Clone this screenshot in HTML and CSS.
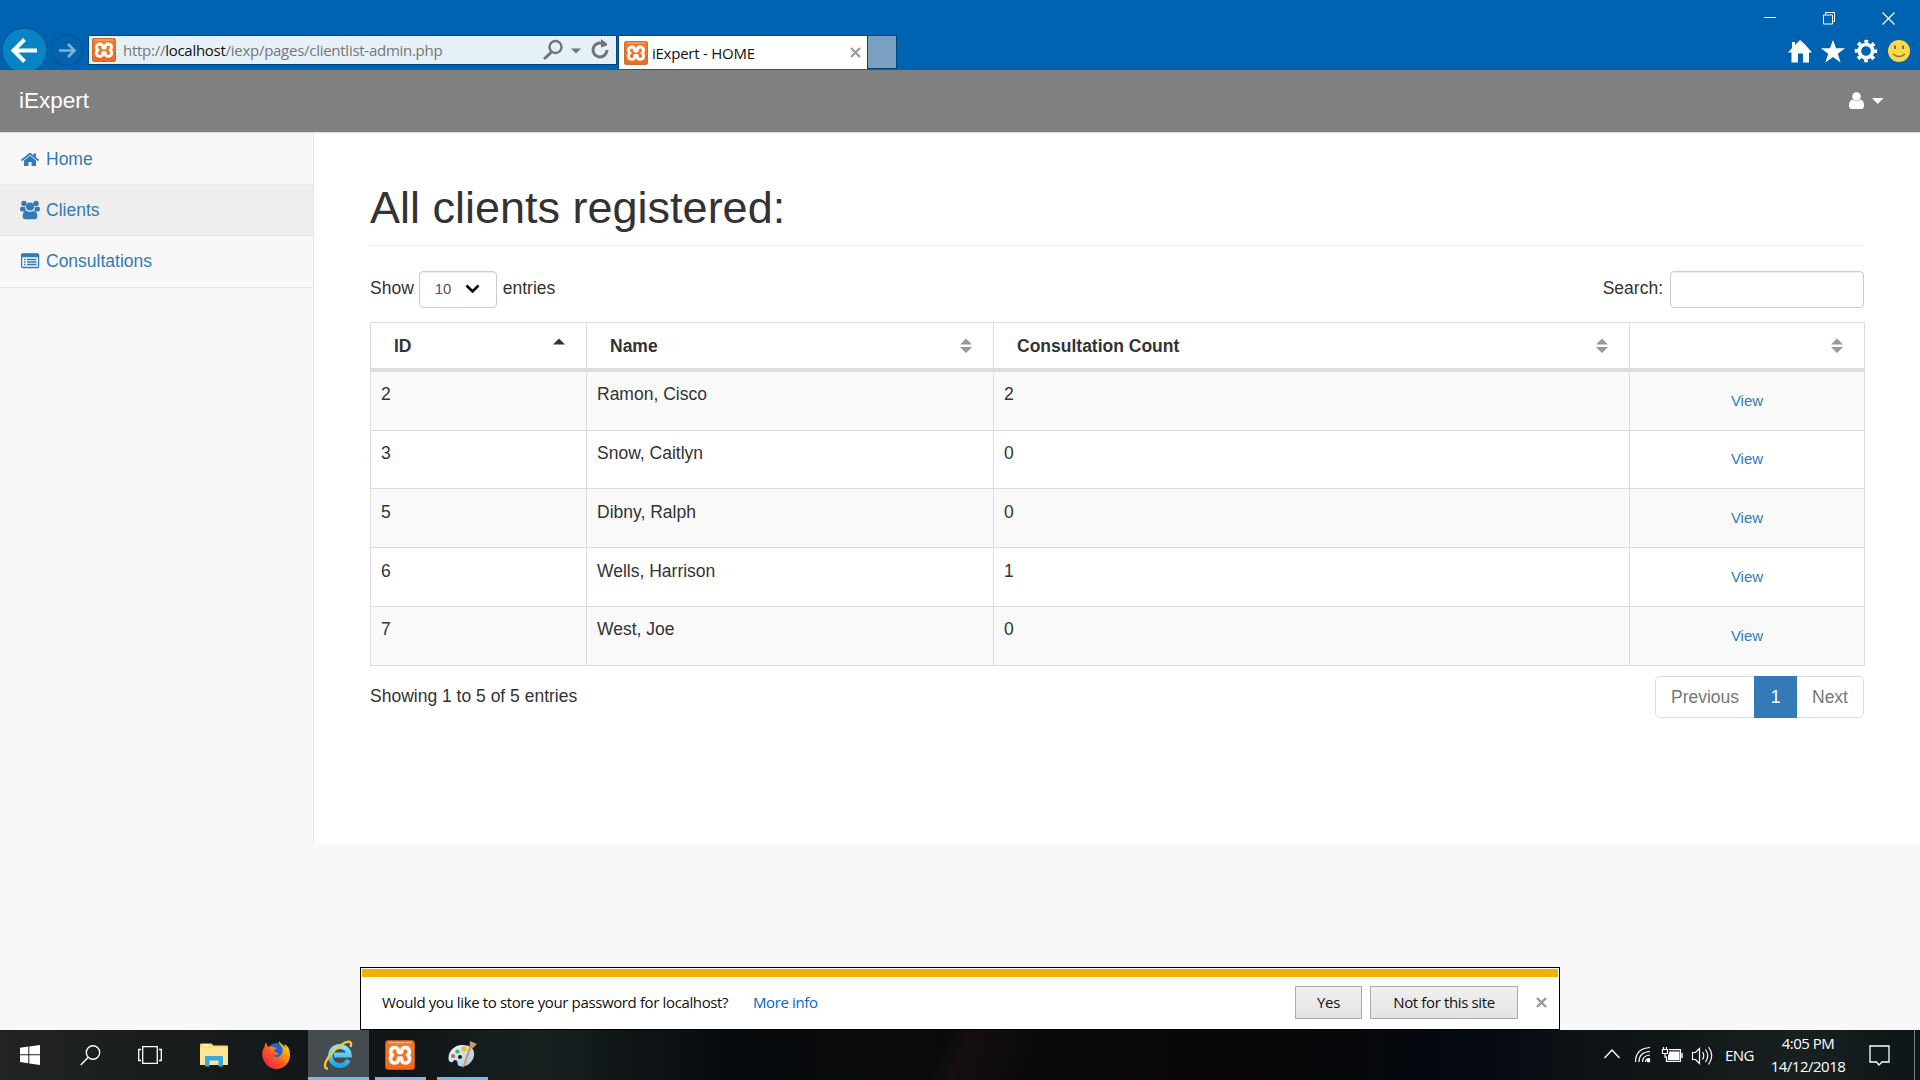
FILE: index.html
```html
<!DOCTYPE html>
<html lang="en">
<head>
<meta charset="utf-8">
<title>iExpert - HOME</title>
<link rel="stylesheet" href="styles.css">
</head>
<body>
<svg class="defs" width="0" height="0">
  <defs>
    <linearGradient id="orange" x1="0" y1="0" x2="0" y2="1"><stop offset="0" stop-color="#d9601a"/><stop offset=".15" stop-color="#f47a2a"/><stop offset="1" stop-color="#f06a1a"/></linearGradient>
    <linearGradient id="fox" x1="0" y1="1" x2="1" y2="0"><stop offset="0" stop-color="#e8115b"/><stop offset=".45" stop-color="#ff5a1f"/><stop offset=".75" stop-color="#ffb000"/><stop offset="1" stop-color="#fff04a"/></linearGradient>
    <linearGradient id="ie" x1="0" y1="0" x2="0" y2="1"><stop offset="0" stop-color="#8ce4fb"/><stop offset="1" stop-color="#22a5e4"/></linearGradient>
    <linearGradient id="pal" x1="0" y1="0" x2="1" y2="1"><stop offset="0" stop-color="#eef7fc"/><stop offset="1" stop-color="#9cc8e6"/></linearGradient>
  </defs>
  <symbol id="xampp" viewBox="0 0 30 30">
    <rect x=".5" y=".5" width="29" height="29" rx="2.5" fill="url(#orange)" stroke="#b9541c"/>
    <path d="M3 2.5h24" stroke="#f8b48a" stroke-width="1.5"/>
    <path d="M10 7.500c-5 0-5.500 5.500-2.500 7.500-3 2-3 8 2.500 8 3 0 3.500-2.500 3.500-5h3c0 2.500.5 5 3.500 5 5.500 0 5.500-6 2.500-8 3-2 2.500-7.500-2.500-7.500-3 0-3.500 2.500-3.500 5h-3C13.500 10 13 7.500 10 7.500z" fill="none" stroke="#fff" stroke-width="3.600" stroke-linejoin="round"/>
  </symbol>
</svg>

<header class="browser">
  <div class="caption">
    <svg width="13" height="13"><path d="M0 5.500h12" stroke="#fff"/></svg>
    <svg width="13" height="13" fill="none" stroke="#fff"><path d="M.5 3h9v9h-9zM2.500 3V.5h9v9H9.500"/></svg>
    <svg width="13" height="13" stroke="#fff" stroke-width="1.200"><path d="M.5.5l12 12M12.500.5l-12 12"/></svg>
  </div>
  <div class="toolbar">
    <svg class="nav" width="86" height="43" viewBox="0 27 86 43">
      <circle cx="24.500" cy="50.500" r="22.500" fill="#0684c6" stroke="#004c87"/>
      <path d="M37 50.500H14M24.500 39.500l-11 11 11 11" fill="none" stroke="#fff" stroke-width="4"/>
      <circle cx="67" cy="50" r="15.500" fill="#0463ad" stroke="#004c87"/>
      <path d="M59 50.500h14M68 44l6.500 6.500-6.500 6.500" fill="none" stroke="#7fb1da" stroke-width="2.600"/>
    </svg>
    <div class="address">
      <svg width="24" height="24"><use href="#xampp"/></svg>
      <span class="url">http://<b>localhost</b>/iexp/pages/clientlist-admin.php</span>
      <svg class="tools" width="68" height="22" viewBox="542 40 68 22">
        <circle cx="555.500" cy="48" r="6" fill="none" stroke="#6f7477" stroke-width="2.400"/><path d="M551.500 53l-7.500 7" stroke="#6f7477" stroke-width="3"/>
        <path d="M571 49.500h10l-5 5z" fill="#6f7477"/>
        <path d="M602 44.300a7 7 0 1 0 5 6.700" fill="none" stroke="#6f7477" stroke-width="3"/><path d="M601 40l6 4.500v2l-6 2z" fill="#6f7477"/>
      </svg>
    </div>
    <div class="tab">
      <svg width="24" height="24"><use href="#xampp"/></svg>
      <span class="tab-title">iExpert - HOME</span>
      <svg width="11" height="11"><path d="M1 1l9 9M10 1l-9 9" stroke="#999" stroke-width="2.200"/></svg>
    </div>
    <div class="new-tab"></div>
    <svg class="commands" width="124" height="26" viewBox="1788 38 124 26">
      <path d="M1800 40l5 4.500 7 8h-3v10h-6v-9h-5v9h-6.500v-10h-3.500l4-4.500v-6h3v3z" fill="#fff"/>
      <path d="M1833 40l3 8.300h9l-7.200 5.400 2.800 8.800-7.600-5.400-7.600 5.400 2.800-8.800-7.200-5.400h9z" fill="#fff"/>
      <circle cx="1866" cy="51" r="6.700" fill="none" stroke="#fff" stroke-width="3.700"/>
      <circle cx="1866" cy="51" r="9.500" fill="none" stroke="#fff" stroke-width="3.400" stroke-dasharray="3.730 3.730" stroke-dashoffset="1.860"/>
      <circle cx="1899" cy="51" r="11" fill="#fdd949"/>
      <path d="M1895 45.500v3.500M1903 45.500v3.500" stroke="#7a7440" stroke-width="2"/><path d="M1893 54q6 5 12 0" fill="none" stroke="#7a7440" stroke-width="1.600"/>
    </svg>
  </div>
</header>

<nav class="navbar">
  <span class="brand">iExpert</span>
  <svg width="36" height="18" viewBox="1848 92 36 18" fill="#fff"><circle cx="1856.500" cy="96.500" r="4.300"/><path d="M1852.500 99.500q4 3.500 8 0 3.500 1 3.500 6 0 3.500-3 3.500h-9q-3 0-3-3.500 0-5 3.500-6zM1872 98h11.500l-5.700 6z"/></svg>
</nav>

<div class="page">
  <aside class="sidebar">
    <a class="item"><svg width="20" height="20" viewBox="0 0 20 20" fill="#337ab7"><path d="M10 5.500l6 5V16h-4.500v-4h-3v4H4v-5.500z"/><path d="M1.500 10.500L10 3.500l8.500 7" fill="none" stroke="#337ab7" stroke-width="1.700"/><path d="M13.500 3.500H16v4l-2.500-2z"/></svg>Home</a>
    <a class="item active"><svg width="20" height="20" viewBox="0 0 20 20" fill="#337ab7"><circle cx="4" cy="3.500" r="2.700"/><circle cx="16" cy="3.500" r="2.700"/><circle cx="10" cy="6.500" r="4"/><path d="M1.500 6.500q2 1 3.800.3-.6 2.500 1 4.700H2Q0 11.500 0 9.500q0-2.500 1.500-3zM18.500 6.500q-2 1-3.800.3.600 2.500-1 4.700H18q2 0 2-2 0-2.500-1.500-3zM6 10.500q4 2.500 8 0 3.300 1 3.300 6 0 2.700-2.500 2.700H5.200q-2.500 0-2.500-2.700 0-5 3.300-6z"/></svg>Clients</a>
    <a class="item"><svg width="20" height="20" viewBox="0 0 20 20"><rect x="1.600" y="3" width="17" height="13.500" rx="1.300" fill="none" stroke="#337ab7" stroke-width="1.300"/><path d="M1.500 2.700h17v3.500h-17z" fill="#337ab7"/><path d="M4 8.500h1.500M7 8.500h9.500M4 11h1.500M7 11h9.500M4 13.500h1.500M7 13.500h9.500" stroke="#337ab7" stroke-width="1.400"/></svg>Consultations</a>
  </aside>
  <main class="content">
    <h1>All clients registered:</h1>
    <div class="controls">
      <span>Show</span>
      <span class="select">10<svg width="15" height="10"><path d="M1.500 1.500l6 6 6-6" fill="none" stroke="#000" stroke-width="2.600"/></svg></span>
      <span>entries</span>
      <span class="search-label">Search:</span>
      <input class="search" type="text">
    </div>
    <table>
      <colgroup><col class="c-id"><col class="c-name"><col class="c-count"><col class="c-view"></colgroup>
      <thead><tr>
        <th><div>ID<svg width="12" height="16"><path d="M0 6.500h12L6 .5z" fill="#333"/></svg></div></th>
        <th><div>Name<svg width="12" height="16"><path d="M0 6.500h12L6 .5zM0 9h12l-6 6z" fill="#999"/></svg></div></th>
        <th><div>Consultation Count<svg width="12" height="16"><path d="M0 6.500h12L6 .5zM0 9h12l-6 6z" fill="#999"/></svg></div></th>
        <th><div><svg width="12" height="16"><path d="M0 6.500h12L6 .5zM0 9h12l-6 6z" fill="#999"/></svg></div></th>
      </tr></thead>
      <tbody>
        <tr><td>2</td><td>Ramon, Cisco</td><td>2</td><td><a>View</a></td></tr>
        <tr class="short"><td>3</td><td>Snow, Caitlyn</td><td>0</td><td><a>View</a></td></tr>
        <tr class="low"><td>5</td><td>Dibny, Ralph</td><td>0</td><td><a>View</a></td></tr>
        <tr class="low"><td>6</td><td>Wells, Harrison</td><td>1</td><td><a>View</a></td></tr>
        <tr><td>7</td><td>West, Joe</td><td>0</td><td><a>View</a></td></tr>
      </tbody>
    </table>
    <div class="footer">
      <span>Showing 1 to 5 of 5 entries</span>
      <div class="pagination"><span class="prev">Previous</span><span class="current">1</span><span class="next">Next</span></div>
    </div>
  </main>
</div>

<div class="prompt">
  <div class="prompt-body">
    <span class="question">Would you like to store your password for localhost?</span>
    <a class="more">More info</a>
    <button class="yes">Yes</button>
    <button class="no">Not for this site</button>
    <svg width="11" height="11"><path d="M1 1l9 9M10 1l-9 9" stroke="#999" stroke-width="2.400"/></svg>
  </div>
</div>

<footer class="taskbar">
  <div class="task system"><svg width="20" height="20" fill="#fff"><path d="M0 2.700L8.300 1.500v7.800H0zM9.300 1.400L20 0v9.300H9.300zM0 10.300h8.300v7.900L0 17zM9.300 10.300H20V20L9.300 18.400z"/></svg></div>
  <div class="task system"><svg width="21" height="21" fill="none" stroke="#fff" stroke-width="1.400"><circle cx="13" cy="7.500" r="6.700"/><path d="M8.300 12.200L.7 20"/></svg></div>
  <div class="task system"><svg width="24" height="18" fill="none" stroke="#fff" stroke-width="1.300"><path d="M4.700.7h14.600v16.600H4.700zM3 3.500H.7v11H3M21 3.500h2.300v11H21"/></svg></div>
  <div class="task pinned"><svg width="28" height="24"><path d="M0 1.500Q0 .5 1 .5h10.500l2 2H27q1 0 1 1V22H0z" fill="#f9d778"/><path d="M0 4.500h28V22H0z" fill="#ffe693"/><path d="M3 1.500h6v1.500H3z" fill="#fff"/><path d="M5 23.500V14q0-1 1-1h16q1 0 1 1v9.500h-4.500V17.500h-9v6z" fill="#37a9e1"/></svg></div>
  <div class="task"><svg width="28" height="28"><circle cx="15" cy="13" r="11" fill="#1b65d4"/><path d="M17 0c-1 4 5 5 3.500 11-1.500 6-8 6-9.500 3 3 1 5-.5 5.500-2-2-.5-4-.5-4.500-2.500l2.500-2.500C11 6 9.500 4 6 6L4 1.500C3 3 2.500 5 2.500 6 0 9 0 12 .5 16 2 23 8 28 14 28c8 0 14-6 14-14C28 6 24 4 22 3l2 4c-2-2-5-4-7-7z" fill="url(#fox)"/></svg></div>
  <div class="task running focused"><svg width="30" height="30"><path d="M25.500 20a9.500 9.500 0 1 1 .8-5H11" fill="none" stroke="url(#ie)" stroke-width="4.800"/><path d="M5 28.500C1 29 .5 24 6 16.500 13 6.500 24 .5 27 2q2 1 .5 5" fill="none" stroke="#f6c92b" stroke-width="2.300"/></svg></div>
  <div class="task running"><svg width="30" height="30"><use href="#xampp"/></svg></div>
  <div class="task running"><svg width="29" height="28"><path d="M14 4c-8 0-14 7-13.500 14 .5 4 4 4 5 2s4-1 4 2c0 5 7 4 11 1.500 8-6 9-19.500-6.500-19.500zM12 14a2 2 0 1 1 0 4 2 2 0 0 1 0-4z" fill="url(#pal)" fill-rule="evenodd"/><circle cx="5" cy="15" r="2" fill="#e25345"/><circle cx="9.500" cy="10.500" r="2.100" fill="#4db34d"/><circle cx="16" cy="8" r="2.600" fill="#f5b51c"/><path d="M23.500 6L17 24l-2.500 4L16 22l5.500-17z" fill="#e58a35"/><path d="M21.500 6L22 0l7 3-4.500 4.500z" fill="#c79a67"/></svg></div>
  <div class="tray">
    <svg width="112" height="24" viewBox="1602 1044 112 24" fill="none" stroke="#fff" stroke-width="1.400">
      <path d="M1604.500 1059l7.500-8 7.500 8"/>
      <path d="M1635.500 1063q0-13.500 14.500-14.500M1639 1063q0-10 11-10.500M1642.500 1063q0-6.500 7.500-7M1645.500 1063q0-3.500 4.500-3.500" stroke-width="1.200"/><circle cx="1648.500" cy="1061.500" r="1.200" fill="#fff"/>
      <path d="M1669 1050.700h11.500v11.600h-14v-5M1662.500 1050.500h5v4h-5zM1663.500 1048v3M1666.500 1048v3M1665 1055v4" stroke-width="1.200"/><path d="M1669.500 1052.500h10v8.500h-11.500v-4z" fill="#fff" stroke="none"/><path d="M1682 1054v5"/>
      <path d="M1692.500 1053.500h3l4-4v15l-4-4h-3zM1702.500 1053q2.500 3.500 0 7.500M1705.500 1050.500q4.500 6 0 12.500M1708.500 1048q6.500 8.500 0 17.500" stroke-width="1.200"/>
    </svg>
    <span class="lang">ENG</span>
    <div class="clock"><span>4:05 PM</span><span class="date">14/12/2018</span></div>
    <svg class="action" width="21" height="21" fill="none" stroke="#fff" stroke-width="1.300"><path d="M1 1h19v16h-7l-3 3-2.500-3H1z"/></svg>
    <div class="show-desktop"></div>
  </div>
</footer>
</body>
</html>
```
FILE: styles.css
```css
* { box-sizing: border-box; }
body { margin: 0; width: 1920px; height: 1080px; overflow: hidden; background: #f8f8f8; color: #333; font: 17.5px/25px "Liberation Sans", Arial, sans-serif; display: flex; flex-direction: column; }
svg { display: block; flex: none; }
.defs { position: absolute; }
span, a { white-space: nowrap; }

.browser { height: 70px; flex: none; background: #0063b1; display: flex; flex-direction: column; font: 15px/20px "Open Sans", "Noto Sans", sans-serif; color: #222; }
.caption { height: 27px; display: flex; justify-content: flex-end; gap: 46px; padding: 12px 25px 0 0; }
.toolbar { height: 43px; display: flex; align-items: flex-start; }
.address { margin: 8px 0 0 2px; width: 529px; height: 30px; display: flex; align-items: center; padding-left: 3px; background: #e6f0f7; border: 1px solid #00457d; }
.url { width: 426px; padding-left: 7px; color: #777; letter-spacing: -.27px; }
.url b { font-weight: 400; color: #111; }
.tab { margin: 8px 0 0 1px; width: 250px; height: 34px; background: #fff; border: 1px solid #00457d; border-bottom: 0; display: flex; align-items: center; padding-left: 5px; }
.tab-title { width: 202px; padding-left: 4px; color: #111; letter-spacing: -.25px; }
.new-tab { margin-top: 8px; width: 29px; height: 34px; background: #7a9fc1; border: 1px solid #00457d; border-left: 0; }
.commands { margin: 11px 8px 0 auto; }

.navbar { height: 63px; flex: none; background: #808080; border-bottom: 1px solid #dcdcdc; display: flex; justify-content: space-between; padding: 22px 36px 0 19px; color: #fff; }
.brand { font-size: 22.5px; line-height: 25px; margin-top: -4px; }

.page { height: 711px; flex: none; display: flex; }
.sidebar { width: 314px; height: 711px; border-right: 1px solid #e7e7e7; background: #f8f8f8; }
.item { height: 51px; display: flex; align-items: center; gap: 6px; padding-left: 20px; color: #337ab7; border-bottom: 1px solid #e7e7e7; }
.item:first-child { height: 52px; padding-top: 2px; }
.item:last-child { height: 52px; padding-bottom: 1px; }
.active { background: #eee; }
.content { width: 1606px; background: #fff; padding: 50px 55px 0 56px; }
h1 { margin: 0 1px 0 0; height: 63px; border-bottom: 1px solid #eee; font-weight: 400; font-size: 45px; line-height: 50px; }
.controls { display: flex; height: 76px; padding: 25px 1px 0 0; }
.controls > span { line-height: 34px; }
.controls .select { width: 78px; height: 37px; margin: 0 6px 0 5px; padding: 0 16px 1px 15px; display: flex; align-items: center; justify-content: space-between; border: 1px solid #ccc; border-radius: 4px; font-size: 15px; color: #555; box-shadow: inset 0 1px 1px rgba(0,0,0,.075); }
.controls .search-label { margin-left: auto; }
.search { width: 194px; height: 37px; margin-left: 7px; border: 1px solid #ccc; border-radius: 4px; box-shadow: inset 0 1px 1px rgba(0,0,0,.075); }

table { width: 1495px; table-layout: fixed; border-spacing: 0; border-right: 1px solid #ddd; }
.c-id { width: 216px; }
.c-name { width: 407px; }
.c-count { width: 636px; }
.c-view { width: 235px; }
th { height: 50px; padding: 1px 21px 0 23px; border: solid #ddd; border-width: 1px 0 4px 1px; text-align: left; }
th div { display: flex; align-items: center; justify-content: space-between; height: 25px; }
th:last-child div { justify-content: flex-end; }
td { height: 59px; padding: 10px 10px 0; vertical-align: top; border: solid #ddd; border-width: 0 0 1px 1px; }
.short td { height: 58px; }
.low td { padding-top: 11px; }
tbody tr:nth-child(odd) { background: #f9f9f9; }
td:last-child { padding-top: 17px; text-align: center; font-size: 15px; line-height: 24px; color: #337ab7; }
.short td:last-child { padding-top: 16px; }
.footer { display: flex; justify-content: space-between; padding: 10px 1px 0 0; }
.footer > span { padding-top: 8px; }
.pagination { display: flex; height: 42px; line-height: 40px; border: 1px solid #ddd; border-radius: 5px; color: #777; }
.pagination span { text-align: center; }
.prev { width: 98px; }
.next { width: 66px; }
.current { width: 43px; height: 42px; margin-top: -1px; line-height: 42px; background: #337ab7; color: #fff; }

.prompt { width: 1200px; height: 63px; flex: none; margin: 123px 0 0 360px; border: 1px solid #000; padding: 1px; background: #fff; font: 15px/20px "Open Sans", "Noto Sans", sans-serif; color: #111; }
.prompt-body { height: 59px; border-top: 8px solid #f2b100; display: flex; align-items: center; padding: 0 11px 0 20px; }
.question { width: 371px; padding-bottom: 2px; letter-spacing: -.37px; }
.more { width: 160px; padding-bottom: 2px; color: #0066cc; letter-spacing: -.37px; }
button { height: 33px; padding: 0 0 2px; font: inherit; color: #111; border: 1px solid #ababab; background: linear-gradient(#f0f0f0, #e3e3e3); letter-spacing: -.37px; }
.yes { width: 67px; margin-left: auto; }
.no { width: 148px; margin: 0 18px 0 8px; }

.taskbar { height: 50px; flex: none; display: flex; color: #fff; background: linear-gradient(115deg, transparent 49%, rgba(40,25,20,.35) 50%, transparent 54%), linear-gradient(90deg, #222423 0, #171b1c 10%, #101518 20%, #182020 28%, #050a0e 38%, #0b0b0c 46%, #080607 65%, #030910 76%, #0b1114 82%, #182020 94%, #0c1517 100%); font: 15px/23px "Open Sans", "Noto Sans", sans-serif; }
.task { width: 62px; height: 50px; display: flex; align-items: center; justify-content: center; }
.system { width: 60px; }
.pinned { margin-left: 3px; }
.running { width: 51px; margin: 0 5px 0 6px; border-bottom: 3px solid #76b9ed; padding: 3px 1px 0 0; }
.focused { width: 61px; margin: 0 0 0 1px; background: #454c4f; }
.tray { margin-left: auto; display: flex; align-items: center; height: 50px; width: 318px; }
.lang { width: 46px; padding-left: 11px; letter-spacing: -.6px; }
.clock { width: 96px; padding-bottom: 1px; display: flex; flex-direction: column; align-items: center; letter-spacing: -.5px; }
.action { margin-left: 13px; }
.show-desktop { width: 6px; height: 50px; margin-left: auto; border-left: 1px solid #777d7e; }
```
